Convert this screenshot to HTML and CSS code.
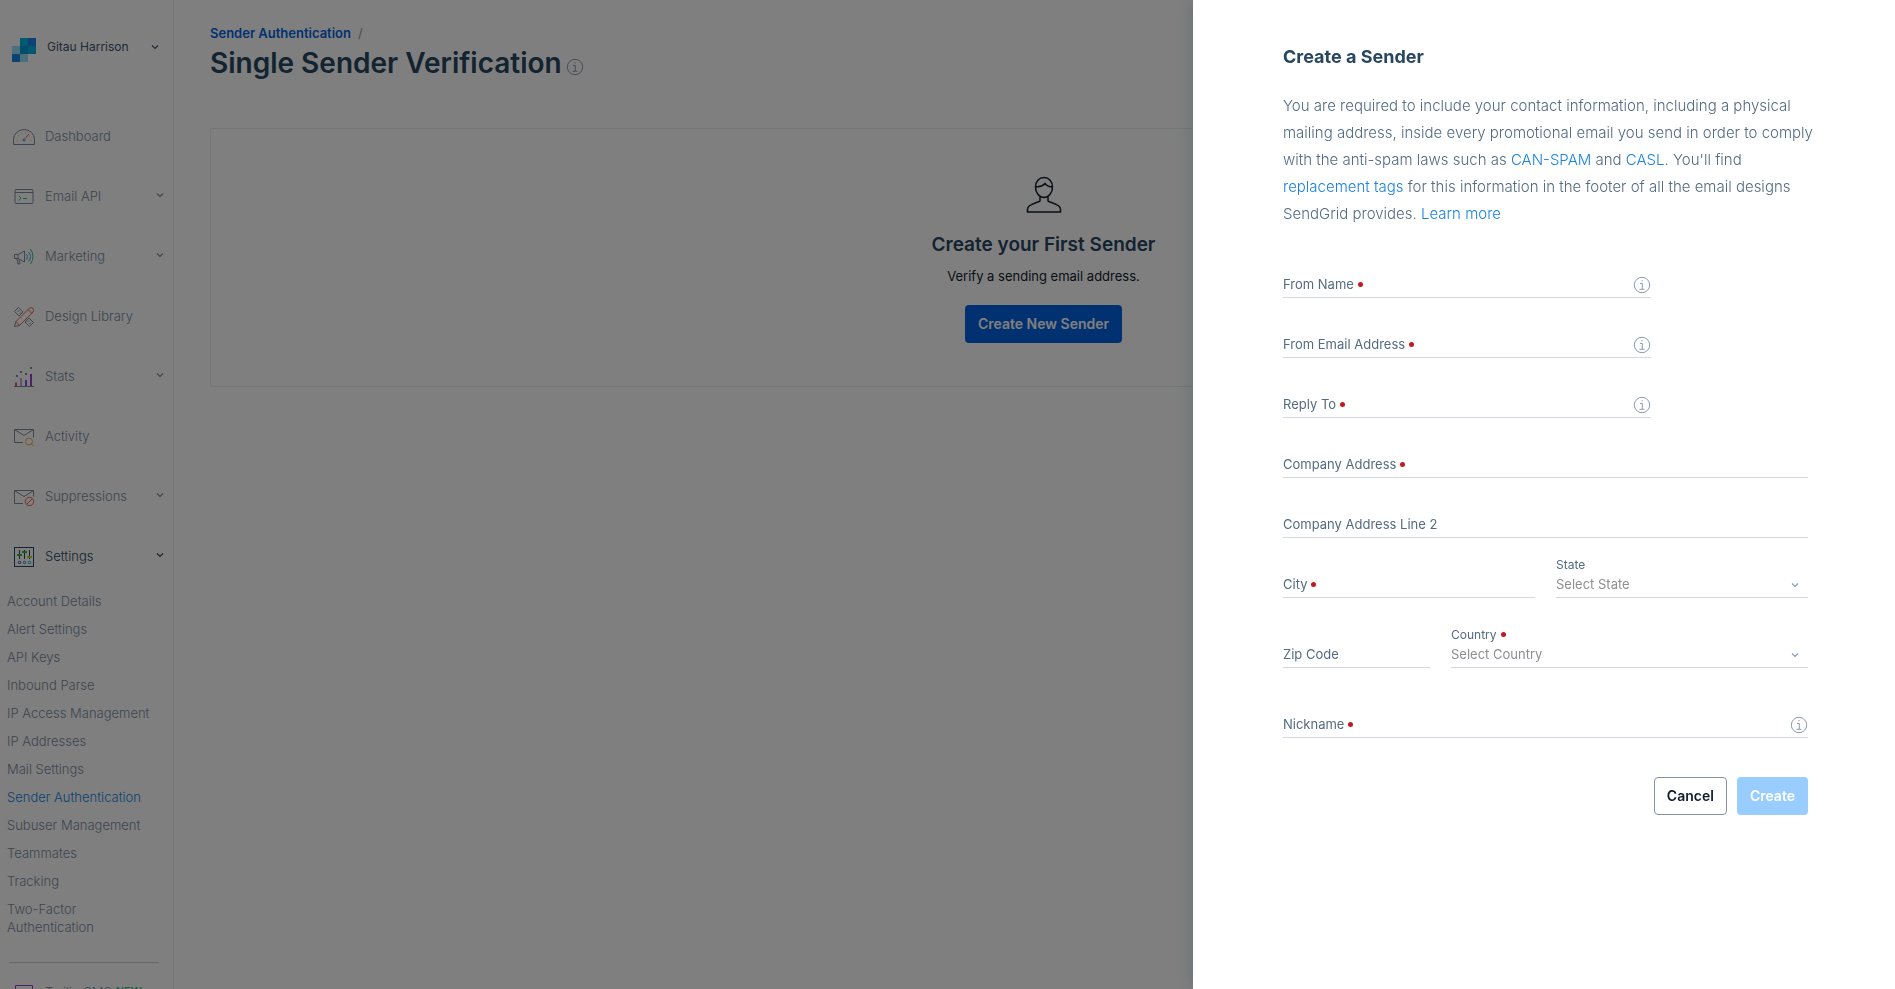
FILE: index.html
```html
<!DOCTYPE html>
<html lang="en">
<head>
  <meta charset="UTF-8">
  <title>Single Sender Verification</title>
  <link rel="stylesheet" href="styles.css">
</head>
<body>
  <svg class="defs" width="0" height="0" aria-hidden="true">
    <symbol id="chevron" viewBox="0 0 8 8">
      <path d="M1 2.500l3 3 3-3" fill="none" stroke="currentColor" stroke-width="1.2"/>
    </symbol>
    <symbol id="info" viewBox="0 0 18 18">
      <circle cx="9" cy="9" r="7.700" fill="none" stroke="currentColor"/>
      <path d="M7 7.500h2.300v5.500M6.500 13.300h5M8.400 4.800h1.300" fill="none" stroke="currentColor"/>
    </symbol>
  </svg>

  <div class="page">
    <nav class="sidebar">
      <button type="button" class="account">
        <svg class="logo" viewBox="0 0 24 24">
          <path d="M0 8h8v8H0zM8 16h8v8H8z" fill="#99e1f4"/>
          <path d="M0 16h8v8H0zM16 0h8v8h-8z" fill="#1a82e2"/>
          <path d="M8 0h8v8H8zM16 8h8v8h-8z" fill="#00b3e3"/>
          <path d="M8 8h8v8H8z" fill="#009dd9"/>
        </svg>
        <span>Gitau Harrison</span>
        <svg class="chevron"><use href="#chevron"/></svg>
      </button>

      <ul class="nav">
        <li><a href="#" class="nav-link">
          <svg class="nav-icon" viewBox="0 0 24 24">
            <path d="M1.500 19.500v-5a10.500 10 0 0 1 21 0v5z"/>
            <path d="M4.500 15.500h1M6 10.500l1 .6M9.500 7.500l.5 1M14 7.500l-.4 1M18 11l-.8.5M18.500 15.500h1" stroke="#f0c040"/>
            <path d="M13 13.500l4-4.500" stroke="#f2545b"/>
            <circle cx="12" cy="15" r="1" stroke="#4c82d8"/>
          </svg>
          <span>Dashboard</span>
        </a></li>
        <li><a href="#" class="nav-link">
          <svg class="nav-icon" viewBox="0 0 24 24">
            <rect x="3" y="4.500" width="18" height="14" rx="1"/>
            <path d="M3 7.500h18"/>
            <path d="M7 11l2 2-2 2.500M11 13.500h4" stroke="#3cc083"/>
          </svg>
          <span>Email API</span>
          <svg class="chevron"><use href="#chevron"/></svg>
        </a></li>
        <li><a href="#" class="nav-link">
          <svg class="nav-icon" viewBox="0 0 24 24">
            <path d="M2.500 9.500v4h3.500l6.500 3.500V6L6 9.500zM6 9.500v4M5 14l1 5h2l-1-4.500"/>
            <path d="M14.500 9q2 2.500 0 5.500M16.500 7q4 4.500 0 9.500" stroke="#3ba7d8"/>
            <path d="M18.500 4q5 7.500 0 15" stroke="#3cc083"/>
          </svg>
          <span>Marketing</span>
          <svg class="chevron"><use href="#chevron"/></svg>
        </a></li>
        <li><a href="#" class="nav-link">
          <svg class="nav-icon" viewBox="0 0 24 24">
            <path d="M2.500 6.500L6.500 2.500l4.500 4.500-4 4zM13 17l4-4 4.500 4.500-4 4zM7 5.500l-1.500 1.500M9 7.500L7.500 9M17 15.500L15.500 17M19 17.500l-1.500 1.500"/>
            <path d="M4 16.500L17.500 3q2-1 3.500.5t0 3.500L7.500 20.500zM16 4.500l4 4" stroke="#ee6352"/>
            <path d="M4 16.500l-1.500 5 5-1"/>
          </svg>
          <span>Design Library</span>
        </a></li>
        <li><a href="#" class="nav-link">
          <svg class="nav-icon" viewBox="0 0 24 24">
            <path d="M4 17.500v4" stroke="#e8488a" stroke-width="2"/>
            <path d="M9 13v8.500" stroke="#c9a0dc" stroke-width="2"/>
            <path d="M14 15v6.500" stroke="#7a5bd0" stroke-width="2"/>
            <path d="M19 9v12.500" stroke="#9a45c8" stroke-width="2"/>
            <path d="M2 21.500h20"/>
            <path d="M4 11h2M8 7h2M13 9h2M18 3h2" stroke-width="2"/>
          </svg>
          <span>Stats</span>
          <svg class="chevron"><use href="#chevron"/></svg>
        </a></li>
        <li><a href="#" class="nav-link">
          <svg class="nav-icon" viewBox="0 0 24 24">
            <path d="M11 17.500H2.500V4.500h19v8M2.500 4.500l9.500 6 9.500-6"/>
            <path d="M19.500 19l2.500 2.500" stroke="#f0a94a"/>
            <circle cx="17" cy="16.500" r="3.500" stroke="#f0a94a"/>
          </svg>
          <span>Activity</span>
        </a></li>
        <li><a href="#" class="nav-link">
          <svg class="nav-icon" viewBox="0 0 24 24">
            <path d="M11 18.500H2.500V5.500h19v6M2.500 5.500l9.500 6 9.500-6"/>
            <circle cx="17.500" cy="16.500" r="4.200" stroke="#ee6352"/>
            <path d="M14.500 19.500l6-6" stroke="#ee6352"/>
          </svg>
          <span>Suppressions</span>
          <svg class="chevron"><use href="#chevron"/></svg>
        </a></li>
        <li><a href="#" class="nav-link active">
          <svg class="nav-icon" viewBox="0 0 24 24">
            <rect x="2.500" y="2.500" width="19" height="19"/>
            <path d="M7.500 5v9M12.500 5v9M17.500 5v9"/>
            <path d="M5 10h5M10 7h5" stroke="#3fae49" stroke-width="2"/>
            <path d="M15 12h5" stroke="#c0cf20" stroke-width="2"/>
            <circle cx="7.500" cy="17.500" r="1.200" stroke="#3a3ad0"/>
            <circle cx="12.500" cy="17.500" r="1.200" stroke="#2a7fd8"/>
            <circle cx="17.500" cy="17.500" r="1.200" stroke="#10b8d8"/>
          </svg>
          <span>Settings</span>
          <svg class="chevron"><use href="#chevron"/></svg>
        </a></li>
      </ul>

      <ul class="subnav">
        <li><a href="#">Account Details</a></li>
        <li><a href="#">Alert Settings</a></li>
        <li><a href="#">API Keys</a></li>
        <li><a href="#">Inbound Parse</a></li>
        <li><a href="#">IP Access Management</a></li>
        <li><a href="#">IP Addresses</a></li>
        <li><a href="#">Mail Settings</a></li>
        <li><a href="#" class="current">Sender Authentication</a></li>
        <li><a href="#">Subuser Management</a></li>
        <li><a href="#">Teammates</a></li>
        <li><a href="#">Tracking</a></li>
        <li><a href="#">Two-Factor Authentication</a></li>
      </ul>

      <hr>

      <a href="#" class="nav-link">
        <svg class="nav-icon" viewBox="0 0 24 24">
          <path d="M3.500 4.500h17v12h-9l-4 4v-4h-4z" stroke="#9a45c8"/>
        </svg>
        <span>Twilio SMS</span>
        <b class="new">NEW</b>
      </a>
    </nav>

    <main class="main">
      <div class="breadcrumb"><a href="#">Sender Authentication</a><span>/</span></div>
      <div class="title-row">
        <h1>Single Sender Verification</h1>
        <svg class="info"><use href="#info"/></svg>
      </div>

      <section class="card">
        <svg class="person" viewBox="0 0 36 38">
          <path d="M18 1.500c-5 0-8.500 4-8.500 9.500S13 21.500 18 21.500s8.500-5 8.500-10.500S23 1.500 18 1.500zM9.500 10.500q6 1 9.500-3 3 3.500 7.500 3.500M14 21v4c-1 1.500-12.500 3-12.500 8v3h33v-3c0-5-11.500-6.500-12.500-8v-4"/>
        </svg>
        <h2>Create your First Sender</h2>
        <p>Verify a sending email address.</p>
        <button type="button" class="btn btn-primary">Create New Sender</button>
      </section>
    </main>
  </div>

  <div class="overlay"></div>

  <aside class="drawer">
    <h2>Create a Sender</h2>
    <p class="intro">
      You are required to include your contact information, including a physical
      mailing address, inside every promotional email you send in order to comply
      with the anti-spam laws such as <a href="#">CAN-SPAM</a> and <a href="#">CASL</a>. You'll find<br>
      <a href="#">replacement tags</a> for this information in the footer of all the email designs
      SendGrid provides. <a href="#">Learn more</a>
    </p>

    <form class="sender-form">
      <div class="row row-short">
        <div class="field">
          <label for="fromName" class="required">From Name</label>
          <input type="text" id="fromName">
          <svg class="info"><use href="#info"/></svg>
        </div>
      </div>
      <div class="row row-short">
        <div class="field">
          <label for="fromEmail" class="required">From Email Address</label>
          <input type="text" id="fromEmail">
          <svg class="info"><use href="#info"/></svg>
        </div>
      </div>
      <div class="row row-short">
        <div class="field">
          <label for="replyTo" class="required">Reply To</label>
          <input type="text" id="replyTo">
          <svg class="info"><use href="#info"/></svg>
        </div>
      </div>
      <div class="row">
        <div class="field">
          <label for="address" class="required">Company Address</label>
          <input type="text" id="address">
        </div>
      </div>
      <div class="row">
        <div class="field">
          <label for="address2">Company Address Line 2</label>
          <input type="text" id="address2">
        </div>
      </div>
      <div class="row row-city">
        <div class="field">
          <label for="city" class="required">City</label>
          <input type="text" id="city">
        </div>
        <div class="select-field">
          <label for="state">State</label>
          <div class="field">
            <select id="state"><option>Select State</option></select>
            <svg class="chevron"><use href="#chevron"/></svg>
          </div>
        </div>
      </div>
      <div class="row row-zip row-tall">
        <div class="field">
          <label for="zip">Zip Code</label>
          <input type="text" id="zip">
        </div>
        <div class="select-field">
          <label for="country" class="required">Country</label>
          <div class="field">
            <select id="country"><option>Select Country</option></select>
            <svg class="chevron"><use href="#chevron"/></svg>
          </div>
        </div>
      </div>
      <div class="row row-tall">
        <div class="field">
          <label for="nickname" class="required">Nickname</label>
          <input type="text" id="nickname">
          <svg class="info"><use href="#info"/></svg>
        </div>
      </div>

      <div class="actions">
        <button type="button" class="btn btn-secondary">Cancel</button>
        <button type="submit" class="btn btn-disabled" disabled>Create</button>
      </div>
    </form>
  </aside>
</body>
</html>
```

FILE: styles.css
```css
* {
  box-sizing: border-box;
}

body {
  margin: 0;
  height: 100vh;
  overflow: hidden;
  font-family: Inter, "Liberation Sans", sans-serif;
  font-size: 13px;
  line-height: 18px;
  color: #546b81;
  background: #fff;
}

h1, h2, p, ul {
  margin: 0;
  padding: 0;
}

ul {
  list-style: none;
}

a {
  color: inherit;
  text-decoration: none;
}

button, input, select {
  font-family: inherit;
}

.defs {
  position: absolute;
}

.chevron {
  width: 8px;
  height: 8px;
  flex: none;
}

.info {
  width: 18px;
  height: 18px;
  flex: none;
  color: #8b9bb0;
}

/* page behind the drawer */

.page {
  display: flex;
  height: 100%;
}

.sidebar {
  width: 174px;
  flex: none;
  overflow: hidden;
  border-right: 1px solid #e9ecef;
  font-weight: 300;
}

.account {
  display: flex;
  align-items: center;
  width: 100%;
  margin: 32px 0 39px;
  padding: 0 14px 0 12px;
  height: 36px;
  border: none;
  background: none;
  font-size: 12px;
  color: #42526b;
}

.account span,
.account .chevron {
  margin-bottom: 7px;
}

.logo {
  width: 24px;
  height: 24px;
  margin-right: 11px;
}

.sidebar .chevron {
  margin-left: auto;
}

.nav-link {
  display: flex;
  align-items: center;
  height: 60px;
  padding: 0 9px 0 12px;
  color: #7c8ca0;
}

.nav-link span {
  margin-bottom: 2px;
}

.nav-link .chevron {
  margin-bottom: 4px;
}

.nav-link.active {
  color: #294661;
}

.nav-icon {
  width: 24px;
  height: 24px;
  margin-right: 9px;
  fill: none;
  stroke: currentColor;
}

.new {
  margin: 0 0 4px 4px;
  font-size: 11px;
  font-weight: 600;
  color: #3cc083;
}

.subnav li {
  padding: 5px 8px 5px 7px;
  color: #7c8ca0;
}

.subnav .current {
  color: #1a82e2;
}

.sidebar hr {
  margin: 21px 14px 0 9px;
  border: none;
  border-top: 1px solid #ced4da;
}

.main {
  flex: 1;
  padding: 24px 18px 0 36px;
}

.breadcrumb {
  display: flex;
  gap: 7px;
  color: #8b9bb0;
}

.breadcrumb a {
  font-weight: 600;
  color: #0263e0;
}

.title-row {
  display: flex;
  align-items: center;
  gap: 4px;
  margin-bottom: 44px;
}

.title-row .info {
  margin-top: 7px;
}

h1 {
  font-size: 28px;
  line-height: 42px;
  font-weight: 600;
  color: #294661;
}

.card {
  display: flex;
  flex-direction: column;
  align-items: center;
  padding: 47px 20px 43px;
  border: 1px solid #e9ecef;
  border-radius: 2px;
}

.person {
  width: 36px;
  height: 38px;
  fill: none;
  stroke: #121c2d;
  stroke-width: 1.5;
}

.card h2 {
  margin-top: 17px;
  font-size: 19px;
  line-height: 28px;
  font-weight: 600;
  color: #294661;
}

.card p {
  margin: 7px 0 19px;
  line-height: 20px;
  color: #121c2d;
}

.btn {
  height: 38px;
  padding: 0 13px 2px;
  border: none;
  border-radius: 4px;
  font-size: 14px;
  font-weight: 600;
}

.btn-primary {
  color: #fff;
  background: #0263e0;
}

.btn-secondary {
  padding: 0 12px 2px;
  border: 1px solid #8891aa;
  color: #121c2d;
  background: #fff;
}

.btn-disabled {
  color: #fff;
  background: #99cdff;
}

.overlay {
  position: fixed;
  inset: 0;
  background: rgba(0, 0, 0, 0.5);
}

/* drawer */

.drawer {
  position: fixed;
  top: 0;
  right: 0;
  bottom: 0;
  width: 702px;
  padding: 43px 87px 0 90px;
  background: #fff;
  box-shadow: 0 0 16px rgba(41, 70, 97, 0.3);
}

.drawer h2 {
  margin-bottom: 21px;
  font-size: 18px;
  line-height: 28px;
  font-weight: 700;
  color: #294661;
}

.intro {
  margin-right: -10px;
  font-size: 15px;
  line-height: 27px;
  font-weight: 300;
}

.intro a {
  color: #1a82e2;
}

.sender-form {
  margin-top: 11px;
}

.row {
  display: grid;
  align-items: end;
  column-gap: 4%;
  min-height: 60px;
}

.row-short {
  width: 70%;
}

.row-tall {
  min-height: 70px;
}

.row-city {
  grid-template-columns: minmax(0, 48fr) minmax(0, 48fr);
}

.row-zip {
  grid-template-columns: minmax(0, 28fr) minmax(0, 68fr);
}

.field {
  display: flex;
  align-items: center;
  height: 25px;
  border-bottom: 1px solid #d5d7e0;
}

.field > label {
  margin-bottom: 2px;
}

.field input {
  flex: 1;
  min-width: 0;
  height: 22px;
  padding: 0 4px;
  border: none;
  outline: none;
  background: none;
  font-size: 13px;
}

.required::after {
  content: "";
  display: inline-block;
  width: 5px;
  height: 5px;
  margin-left: 4px;
  border-radius: 50%;
  background: #c2191f;
  vertical-align: 2px;
}

.select-field > label {
  display: block;
  margin-bottom: 1px;
  font-size: 12px;
  line-height: 14px;
}

.select-field .field {
  padding-right: 9px;
}

.select-field .chevron {
  color: #8b9bb0;
}

.select-field select {
  flex: 1;
  height: 22px;
  margin-bottom: 2px;
  padding: 0;
  border: none;
  outline: none;
  appearance: none;
  background: none;
  font-size: 13px;
  color: #8f8f8f;
}

.actions {
  display: flex;
  justify-content: flex-end;
  gap: 10px;
  margin-top: 39px;
}
```
